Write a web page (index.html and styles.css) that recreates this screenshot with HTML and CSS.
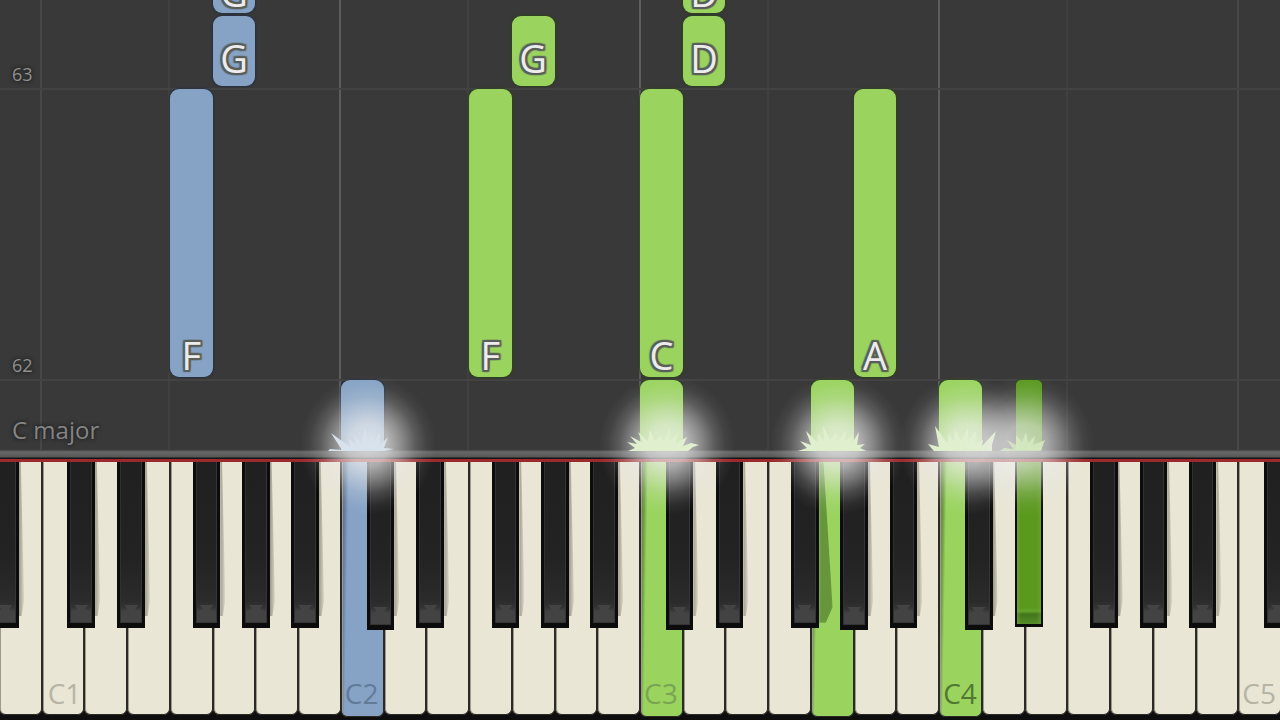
FILE: index.html
```html
<!DOCTYPE html>
<html lang="en">
<head>
<meta charset="utf-8">
<meta name="viewport" content="width=device-width, initial-scale=1">
<title>Piano roll</title>
<link rel="stylesheet" href="styles.css">
</head>
<body>
<main class="player">
  <section class="roll" aria-label="Falling notes">
    <div class="octaves" aria-hidden="true">
      <i></i><i class="three"></i><i class="four"></i><i class="three bright"></i><i class="four"></i><i class="three bright"></i><i class="four"></i><i class="three bright"></i><i class="four"></i><i></i>
    </div>
    <div class="measures">
      <div class="measure">63</div>
      <div class="measure full">62</div>
      <div class="measure last">C major</div>
    </div>
    <div class="notes">
      <div class="note blue beat4" style="--k:5">G</div>
      <div class="note blue beat3" style="--k:5">G</div>
      <div class="note blue long" style="--k:4">F</div>
      <div class="note blue now" style="--k:8"></div>
      <div class="note long" style="--k:11">F</div>
      <div class="note beat3" style="--k:12">G</div>
      <div class="note beat4" style="--k:16">D</div>
      <div class="note beat3" style="--k:16">D</div>
      <div class="note long" style="--k:15">C</div>
      <div class="note now" style="--k:15"></div>
      <div class="note now" style="--k:19"></div>
      <div class="note long" style="--k:20">A</div>
      <div class="note now" style="--k:22"></div>
      <div class="note now sharp" style="--k:23.8"></div>
    </div>
  </section>
  <div class="rail"></div>
  <section class="keyboard" aria-label="Keyboard">
    <div class="key"><button class="white" aria-label="B0"></button><button class="black edge" aria-label="A sharp 0"></button></div>
    <div class="key"><button class="white">C1</button><button class="black cs" aria-label="C sharp 1"></button></div>
    <div class="key"><button class="white" aria-label="D1"></button><button class="black ds" aria-label="D sharp 1"></button></div>
    <div class="key"><button class="white" aria-label="E1"></button></div>
    <div class="key"><button class="white" aria-label="F1"></button><button class="black fs" aria-label="F sharp 1"></button></div>
    <div class="key"><button class="white" aria-label="G1"></button><button class="black gs" aria-label="G sharp 1"></button></div>
    <div class="key"><button class="white" aria-label="A1"></button><button class="black as" aria-label="A sharp 1"></button></div>
    <div class="key"><button class="white" aria-label="B1"></button></div>
    <div class="key"><button class="white on blue">C2</button><button class="black cs deep" aria-label="C sharp 2"></button></div>
    <div class="key"><button class="white" aria-label="D2"></button><button class="black ds" aria-label="D sharp 2"></button></div>
    <div class="key"><button class="white" aria-label="E2"></button></div>
    <div class="key"><button class="white" aria-label="F2"></button><button class="black fs" aria-label="F sharp 2"></button></div>
    <div class="key"><button class="white" aria-label="G2"></button><button class="black gs" aria-label="G sharp 2"></button></div>
    <div class="key"><button class="white" aria-label="A2"></button><button class="black as" aria-label="A sharp 2"></button></div>
    <div class="key"><button class="white" aria-label="B2"></button></div>
    <div class="key"><button class="white on">C3</button><button class="black cs deep" aria-label="C sharp 3"></button></div>
    <div class="key"><button class="white" aria-label="D3"></button><button class="black ds" aria-label="D sharp 3"></button></div>
    <div class="key"><button class="white" aria-label="E3"></button></div>
    <div class="key"><button class="white" aria-label="F3"></button><button class="black fs cast" aria-label="F sharp 3"></button></div>
    <div class="key"><button class="white on" aria-label="G3"></button><button class="black gs deep" aria-label="G sharp 3"></button></div>
    <div class="key"><button class="white" aria-label="A3"></button><button class="black as" aria-label="A sharp 3"></button></div>
    <div class="key"><button class="white" aria-label="B3"></button></div>
    <div class="key"><button class="white on middle">C4</button><button class="black cs deep" aria-label="C sharp 4"></button></div>
    <div class="key"><button class="white" aria-label="D4"></button><button class="black ds pressed" aria-label="D sharp 4"></button></div>
    <div class="key"><button class="white" aria-label="E4"></button></div>
    <div class="key"><button class="white" aria-label="F4"></button><button class="black fs" aria-label="F sharp 4"></button></div>
    <div class="key"><button class="white" aria-label="G4"></button><button class="black gs" aria-label="G sharp 4"></button></div>
    <div class="key"><button class="white" aria-label="A4"></button><button class="black as" aria-label="A sharp 4"></button></div>
    <div class="key"><button class="white" aria-label="B4"></button></div>
    <div class="key"><button class="white last-c">C5</button><button class="black cs" aria-label="C sharp 5"></button></div>
    <div class="sparks" aria-hidden="true">
      <div class="spark" style="--k:8.5">
        <svg class="blades" viewBox="0 0 80 28"><path fill="#d8e2ec" d="M0 28L2 26L14 27L3 10L22 24L21 16L28 22L26 12L33 20L37 5L40 19L46 12L45 20L52 9L52 22L60 14L56 25L66 26L56 28Z"/></svg>
      </div>
      <div class="spark" style="--k:15.5">
        <svg class="blades" viewBox="0 0 80 28"><path fill="#e0f0cf" d="M1 28L8 25L0 19L10 21L3 13L16 20L11 9L21 18L23 7L28 18L33 12L37 19L43 5L42 19L52 9L48 21L60 14L56 23L64 20L72 22L66 24L61 28Z"/></svg>
      </div>
      <div class="spark" style="--k:19.5">
        <svg class="blades" viewBox="0 0 80 28"><path fill="#e0f0cf" d="M0 28L9 25L2 18L13 22L8 8L19 19L20 10L26 18L25 3L32 17L38 9L40 18L48 7L47 19L55 11L54 20L61 9L59 22L67 21L62 25L68 28Z"/></svg>
      </div>
      <div class="spark" style="--k:22.5">
        <svg class="blades" viewBox="0 0 80 28"><path fill="#e0f0cf" d="M7 28L1 21L12 24L8 3L20 20L22 11L27 19L28 6L34 18L41 5L41 18L49 8L48 20L56 17L55 23L69 8L65 22L65 28Z"/></svg>
      </div>
      <div class="spark small" style="--k:23.9">
        <svg class="blades" viewBox="0 0 80 28"><path fill="#e0f0cf" d="M14 28L18 25L27 26L21 17L30 22L30 12L36 19L40 9L42 20L49 13L47 22L59 17L55 28Z"/></svg>
      </div>
    </div>
  </section>
</main>
</body>
</html>
```
FILE: styles.css
```css
* { box-sizing: border-box; }

body {
  margin: 0;
  background: #0e0e0e;
  font-family: "Open Sans", "Noto Sans", sans-serif;
}

.player {
  display: flex;
  flex-direction: column;
  height: 100vh;
  min-height: 480px;
  overflow: hidden;
}

/* Falling notes */
.roll {
  position: relative;
  flex: 1;
  overflow: hidden;
  display: grid;
  background: #393939;
}

.octaves, .measures { grid-area: 1 / 1; }

.octaves {
  display: grid;
  grid-template-columns: repeat(30, 1fr);
  margin: 0 0 0 -3px;
}
.octaves i { border-left: 2px solid #474747; }
.octaves .three { grid-column: span 3; }
.octaves .four { grid-column: span 4; border-color: #404040; }
.octaves .bright { border-color: #5d5d5d; }

.measures { display: flex; flex-direction: column; }
.measure {
  flex: 1;
  display: flex;
  align-items: flex-end;
  padding: 0 12px 4px;
  border-bottom: 2px solid #434343;
  color: #909090;
  font-size: 18px;
  font-weight: 500;
  line-height: 20px;
  text-shadow: 0 0 3px #222, 0 0 4px #222;
}
.measure.full { flex: 0 0 291px; }
.measure.last {
  flex: 0 0 69px;
  padding-bottom: 6px;
  border: 0;
  color: #848484;
  font-size: 24px;
  line-height: 28px;
}

.notes { position: absolute; inset: 0 -1px; }
.note {
  position: absolute;
  left: calc(var(--k) * 100% / 30);
  width: calc(100% / 30);
  height: 70px;
  display: flex;
  align-items: flex-end;
  justify-content: center;
  padding-bottom: 7px;
  border-radius: 9px;
  background: #9ad45f;
  box-shadow: 0 0 2px 1px #2f4021;
  color: #ececec;
  font-size: 38px;
  font-weight: 500;
  line-height: 42px;
  text-shadow: 2px 0 1px #5a5f5a, -2px 0 1px #5a5f5a, 0 2px 1px #5a5f5a, 0 -2px 1px #5a5f5a,
    2px 2px 1px #5a5f5a, -2px 2px 1px #5a5f5a, 2px -2px 1px #5a5f5a, -2px -2px 1px #5a5f5a;
}
.note.blue { background: #86a3c5; box-shadow: 0 0 2px 1px #25303f; }
.note.long { bottom: 73px; height: 288px; padding-bottom: 1px; }
.note.beat3 { bottom: 364px; }
.note.beat4 { bottom: 437px; padding-bottom: 0; }
.note.now { bottom: 0; border-radius: 9px 9px 0 0; }
.note.sharp { width: calc(60% / 30); border-radius: 5px 5px 0 0; background: #5a9920; }

.rail {
  height: 12px;
  border-bottom: 3px solid #9c2a2d;
  background: linear-gradient(#444 0, #686868 2px, #575757 7px, #161616 8px);
}

/* Keyboard */
.keyboard {
  position: relative;
  display: grid;
  grid-template-columns: repeat(30, 1fr);
  height: 258px;
  margin: 0 -1px;
  background: #0e0e0e;
}
.key { position: relative; height: 253px; }

.white {
  display: flex;
  align-items: flex-end;
  width: 100%;
  height: 100%;
  padding: 0 0 2px 5px;
  border: 1px solid #2b2a27;
  border-top: 0;
  border-radius: 0 0 6px 6px;
  background: #e9e6d5;
  box-shadow: inset 1px 0 #9d9b8e;
  color: #b7b4a5;
  font: 500 28px/38px "Open Sans", "Noto Sans", sans-serif;
}
.white.last-c { padding-left: 3px; }
.white.on {
  height: calc(100% + 2px);
  padding: 0 0 4px 3px;
  background: linear-gradient(91deg, rgba(20, 35, 10, .5), rgba(20, 35, 10, .3) 4px, transparent 7px), #9ad45f;
  color: #79a553;
}
.white.blue {
  background: linear-gradient(91deg, rgba(20, 35, 60, .5), rgba(20, 35, 60, .25) 4px, transparent 7px), #86a3c5;
  color: #617b99;
}
.white.middle { color: #517732; }

.black {
  position: absolute;
  z-index: 2;
  top: 0;
  width: 65%;
  height: 166px;
  padding: 0;
  border: solid #0c0c0c;
  border-width: 0 3px 5px;
  background: linear-gradient(#202020, #232323 60%, #2b2b2c 86%, #323233 90%, #434344 93%);
  box-shadow: inset 1px 0 #303032, inset -1px -1px #353537;
}
.black::before {
  content: "";
  position: absolute;
  left: 1px;
  right: 1px;
  bottom: 10px;
  height: 8px;
  background: #434344;
  clip-path: polygon(15% 0, 85% 0, 70% 50%, 100% 100%, 0 100%, 30% 50%);
}
.black::after {
  content: "";
  position: absolute;
  top: 0;
  left: calc(100% + 3px);
  width: 5px;
  height: 154px;
  background: linear-gradient(90deg, rgba(40, 38, 30, .4), rgba(40, 38, 30, .08));
  clip-path: polygon(0 0, 35% 0, 100% 90%, 50% 100%, 0 100%);
}
.cs { left: 60%; }
.ds { left: 77%; }
.fs { left: 53%; }
.gs { left: 69%; }
.as { left: 84%; }
.edge { left: -18%; }
.deep { height: 168px; }
.cast::after {
  width: 14px;
  height: 161px;
  background: rgba(50, 85, 25, .5);
  filter: blur(1px);
}
.pressed {
  height: 165px;
  border-width: 0 2px 3px;
  background: linear-gradient(90deg, rgba(130, 165, 70, .5), transparent 4px, transparent 80%, rgba(130, 165, 70, .4)), linear-gradient(#5a991e 90%, #65a32c 92%, #43761b 94%, #558d29);
  box-shadow: none;
}
.pressed::before, .pressed::after { display: none; }

/* Light bursts where notes meet the keys */
.sparks { position: absolute; z-index: 3; inset: 0; pointer-events: none; }
.spark {
  position: absolute;
  top: -87px;
  left: calc(var(--k) * 100% / 30 - 62px);
  width: 136px;
  height: 140px;
  background: radial-gradient(closest-side, rgba(245, 245, 245, .76), rgba(240, 240, 240, .68) 30%, rgba(235, 235, 235, .46) 50%, rgba(230, 230, 230, .2) 70%, rgba(230, 230, 230, .06) 86%, transparent);
}
.blades {
  position: absolute;
  left: 28px;
  top: 48px;
  width: 80px;
  height: 28px;
}
.small { opacity: .9; }
```
